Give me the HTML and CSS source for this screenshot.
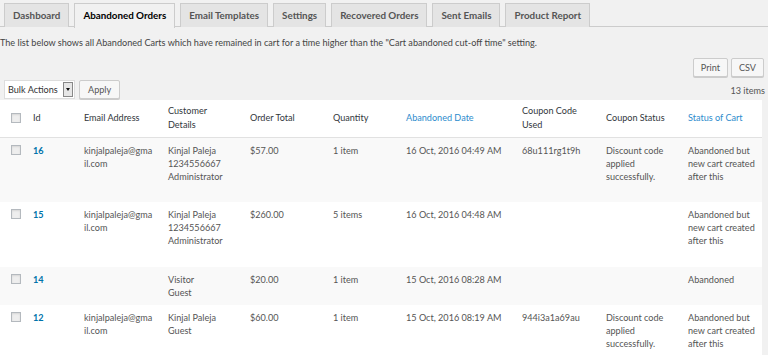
FILE: index.html
```html
<!DOCTYPE html>
<html lang="en">
<head>
    <meta charset="UTF-8">
    <link rel="stylesheet" href="styles.css">
</head>
<body>
    <div class="wrap">
        <div class="nav-tabs">
            <a href="#" class="nav-tab">Dashboard</a>
            <a href="#" class="nav-tab active">Abandoned Orders</a>
            <a href="#" class="nav-tab">Email Templates</a>
            <a href="#" class="nav-tab">Settings</a>
            <a href="#" class="nav-tab">Recovered Orders</a>
            <a href="#" class="nav-tab">Sent Emails</a>
            <a href="#" class="nav-tab">Product Report</a>
        </div>

        <p class="desc">The list below shows all Abandoned Carts which have remained in cart for a time higher than the "Cart abandoned cut-off time" setting.</p>

        <div class="export">
            <a href="#" class="button">Print</a>
            <a href="#" class="button">CSV</a>
        </div>

        <div class="tablenav">
            <div class="bulk">
                <div class="select">
                    <span>Bulk Actions</span>
                    <span class="arrow"></span>
                </div>
                <a href="#" class="button apply">Apply</a>
            </div>
            <span class="count">13 items</span>
        </div>

        <table class="list">
            <colgroup>
                <col style="width:25px">
                <col style="width:51px">
                <col style="width:84px">
                <col style="width:82px">
                <col style="width:83px">
                <col style="width:73px">
                <col style="width:116px">
                <col style="width:84px">
                <col style="width:82px">
                <col style="width:82px">
            </colgroup>
            <thead>
                <tr>
                    <th class="cb"><span class="check"></span></th>
                    <th>Id</th>
                    <th>Email Address</th>
                    <th>Customer Details</th>
                    <th>Order Total</th>
                    <th>Quantity</th>
                    <th><a href="#" class="sort">Abandoned Date</a></th>
                    <th>Coupon Code Used</th>
                    <th>Coupon Status</th>
                    <th><a href="#" class="sort">Status of Cart</a></th>
                </tr>
            </thead>
            <tbody>
                <tr class="alt tall">
                    <td class="cb"><span class="check"></span></td>
                    <td><a href="#" class="id">16</a></td>
                    <td class="email">kinjalpaleja@gma<wbr>il.com</td>
                    <td>Kinjal Paleja<br>1234556667<br>Administrator</td>
                    <td>$57.00</td>
                    <td>1 item</td>
                    <td>16 Oct, 2016 04:49 AM</td>
                    <td>68u111rg1t9h</td>
                    <td>Discount code applied successfully.</td>
                    <td class="status">Abandoned but new cart created after this</td>
                </tr>
                <tr class="tall">
                    <td class="cb"><span class="check"></span></td>
                    <td><a href="#" class="id">15</a></td>
                    <td class="email">kinjalpaleja@gma<wbr>il.com</td>
                    <td>Kinjal Paleja<br>1234556667<br>Administrator</td>
                    <td>$260.00</td>
                    <td>5 items</td>
                    <td>16 Oct, 2016 04:48 AM</td>
                    <td></td>
                    <td></td>
                    <td class="status">Abandoned but new cart created after this</td>
                </tr>
                <tr class="alt">
                    <td class="cb"><span class="check"></span></td>
                    <td><a href="#" class="id">14</a></td>
                    <td class="email"></td>
                    <td>Visitor<br>Guest</td>
                    <td>$20.00</td>
                    <td>1 item</td>
                    <td>15 Oct, 2016 08:28 AM</td>
                    <td></td>
                    <td></td>
                    <td class="status">Abandoned</td>
                </tr>
                <tr class="tall">
                    <td class="cb"><span class="check"></span></td>
                    <td><a href="#" class="id">12</a></td>
                    <td class="email">kinjalpaleja@gma<wbr>il.com</td>
                    <td>Kinjal Paleja<br>Guest</td>
                    <td>$60.00</td>
                    <td>1 item</td>
                    <td>15 Oct, 2016 08:19 AM</td>
                    <td>944i3a1a69au</td>
                    <td>Discount code applied successfully.</td>
                    <td class="status">Abandoned but new cart created after this</td>
                </tr>
            </tbody>
        </table>
    </div>
</body>
</html>
```

FILE: styles.css
```css
*{
    padding: 0;
    margin: 0;
    box-sizing: border-box;
}

body{
    background-color: #f1f1f1;
    font-family: Lato, "Open Sans", sans-serif;
    font-size: 9.1px;
    color: #444;
    overflow: hidden;
}

a{
    text-decoration: none;
}

.wrap{
    width: 768px;
}

/* tabs */
.nav-tabs{
    display: flex;
    gap: 5px;
    padding: 3px 0 0 4px;
    border-bottom: 1px solid #ccc;
    height: 27px;
}

.nav-tab{
    display: block;
    height: 24px;
    line-height: 22px;
    padding: 0 8px;
    border: 1px solid #ccc;
    border-bottom: none;
    background-color: #e4e4e4;
    color: #555;
    font-weight: bold;
    font-size: 9.8px;
    white-space: nowrap;
}

.nav-tab.active{
    background-color: #f1f1f1;
    color: #000;
    height: 25px;
}

.desc{
    margin-top: 9px;
    line-height: 14px;
}

/* buttons */
.button{
    display: inline-block;
    height: 19px;
    line-height: 17px;
    padding: 0 7px;
    border: 1px solid #ccc;
    border-radius: 2px;
    background-color: #f7f7f7;
    color: #555;
    box-shadow: 0 1px 0 #ccc;
    white-space: nowrap;
}

.export{
    display: flex;
    justify-content: flex-end;
    gap: 3px;
    padding-right: 4px;
    margin-top: 8px;
}

.tablenav{
    display: flex;
    justify-content: space-between;
    align-items: center;
    padding: 1px 3px 0 4px;
    margin-top: 1px;
    height: 22px;
}

.bulk{
    display: flex;
    gap: 4px;
}

.select{
    display: flex;
    align-items: center;
    justify-content: space-between;
    width: 71px;
    height: 19px;
    padding: 0 1px 0 3px;
    background-color: #fff;
    border: 1px solid #ddd;
    color: #333;
    white-space: nowrap;
}

.select .arrow{
    position: relative;
    display: block;
    width: 10px;
    height: 15px;
    border: 1px solid #888;
    background-color: #e6e6e6;
}

.select .arrow::after{
    content: '';
    position: absolute;
    left: 2px;
    top: 5px;
    border-left: 2.5px solid transparent;
    border-right: 2.5px solid transparent;
    border-top: 3px solid #111;
}

.apply{
    padding: 0 8px;
}

.count{
    color: #555;
    padding-top: 1px;
}

/* table */
.list{
    width: 762px;
    table-layout: fixed;
    border-collapse: collapse;
    background-color: #fff;
}

.list th{
    height: 37px;
    text-align: left;
    font-weight: normal;
    color: #32373c;
    line-height: 14px;
    padding: 0 8px;
    vertical-align: middle;
    border-bottom: 1px solid #e1e1e1;
}

.list td{
    vertical-align: top;
    line-height: 13px;
    padding: 6px 6px 6px 8px;
    color: #555;
}

.list tr.tall td{
    height: 65px;
}

.list tr.alt td{
    background-color: #f9f9f9;
}

.list .cb{
    padding-left: 11px;
    padding-right: 0;
}

.list td.cb{
    padding-top: 7px;
}

.list td.status{
    padding-right: 2px;
}

.sort{
    color: #2e8ccd;
}

.id{
    color: #0073aa;
    font-weight: bold;
}

.check{
    display: block;
    width: 10px;
    height: 10px;
    border: 1px solid #b4b9be;
    background-color: #eee;
    box-shadow: inset 0 1px 2px rgba(0,0,0,.1);
}
```
